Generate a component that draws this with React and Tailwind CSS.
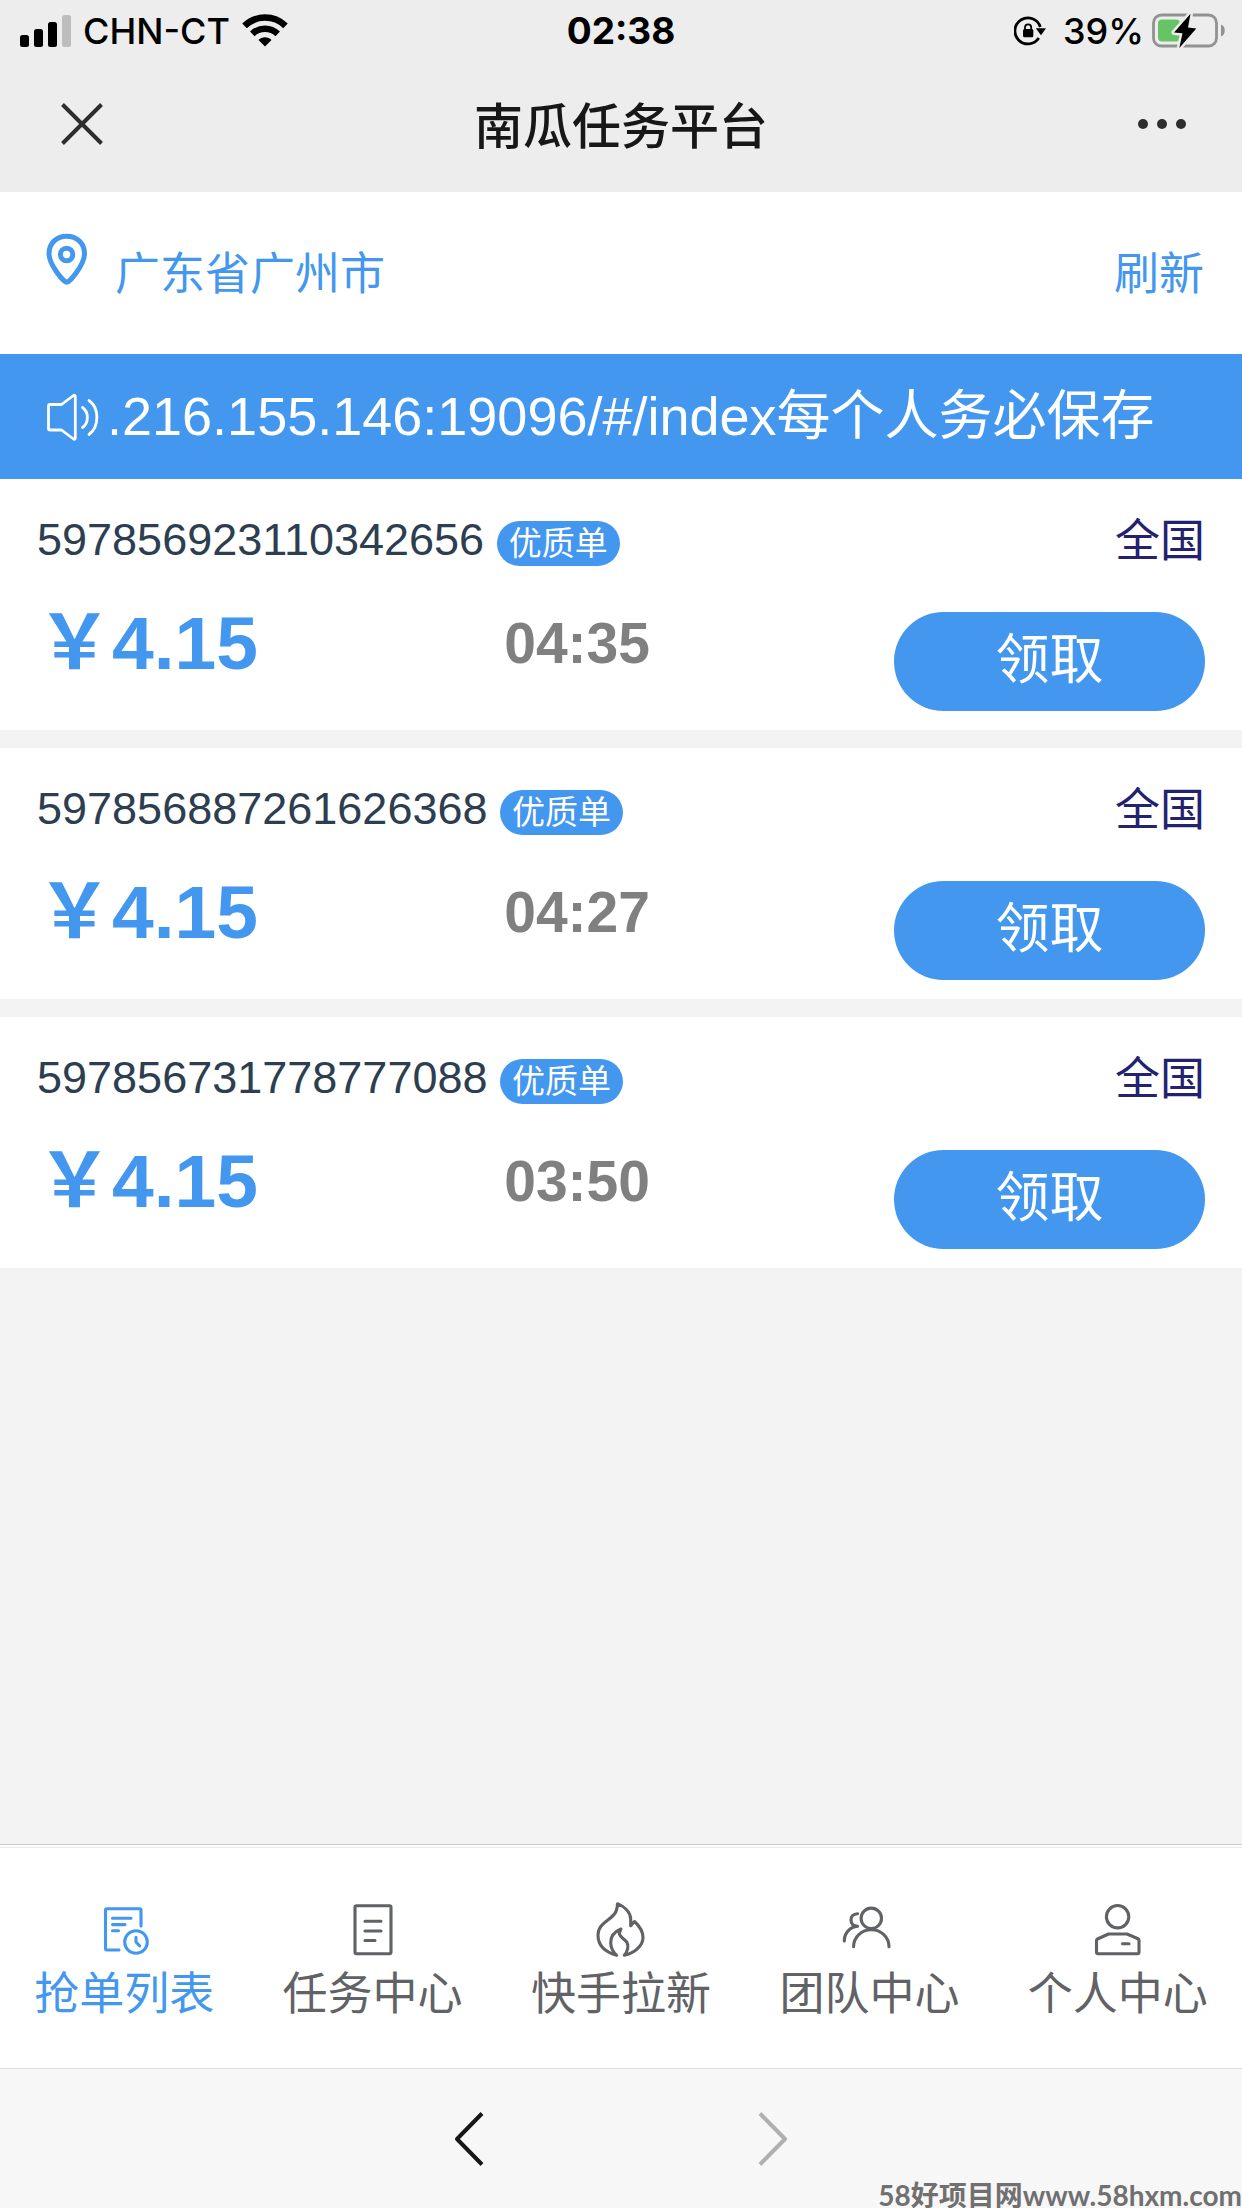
import React from "react";

const orders = [
  { id: "597856923110342656", tag: "优质单", area: "全国", price: "4.15", time: "04:35" },
  { id: "597856887261626368", tag: "优质单", area: "全国", price: "4.15", time: "04:27" },
  { id: "597856731778777088", tag: "优质单", area: "全国", price: "4.15", time: "03:50" },
];

const NavIcon = ({ children }) => (
  <svg
    viewBox="0 0 60 60"
    className="size-[60px]"
    fill="none"
    stroke="currentColor"
    strokeWidth="3.1"
    strokeLinecap="round"
    strokeLinejoin="round"
    aria-hidden="true"
  >
    {children}
  </svg>
);

const tabs = [
  {
    label: "抢单列表",
    active: true,
    icon: (
      <NavIcon>
        <path d="M47 26V10.2q0-1.5-1.5-1.5H13q-1.5 0-1.5 1.5v38.3q0 1.5 1.5 1.5H25" />
        <path d="M18.5 18.3H37M18.5 24.6H31M18.5 30.8H24.5" />
        <circle cx="42" cy="42" r="11.3" />
        <path d="M42 37.3V42l3.6 3.8" />
      </NavIcon>
    ),
  },
  {
    label: "任务中心",
    icon: (
      <NavIcon>
        <rect x="12" y="5.7" width="36" height="48" rx="1.5" />
        <path d="M22 21.3H38M22 31H38M22 40.5H32" />
      </NavIcon>
    ),
  },
  {
    label: "快手拉新",
    icon: (
      <NavIcon>
        <path d="M26.5 3.7C33 6.5 39.7 12 39.7 19.5V25.8C41.2 24.4 42 22.5 43.5 21.5C49 26.5 52 32.5 52 37.5C52 46 43 53.5 33.3 55.3C36.8 51.5 37.8 46 36 42.5C34.5 39.5 28.3 37 28.3 33.3L29.9 29C24 31.5 19.5 36.500 19.700 43C19.900 48 22.500 52.500 25.700 55.300C14 52 7 45 7 35.3C7 22 21 20.5 25 11.5C26.2 8.5 26.5 6.5 26.5 3.7Z" />
      </NavIcon>
    ),
  },
  {
    label: "团队中心",
    icon: (
      <NavIcon>
        <circle cx="32.3" cy="18.3" r="10.2" />
        <path d="M14.6 46.8C14.6 37 22.5 29.7 32.3 29.7S50 37 50 46.8" />
        <path d="M18.6 13.7C14.5 13.9 12 16.3 12 20S14.5 26 18.6 26.3C11 27 5.3 33 5.3 41" />
      </NavIcon>
    ),
  },
  {
    label: "个人中心",
    icon: (
      <NavIcon>
        <circle cx="29.6" cy="16.7" r="11.2" />
        <path d="M8.5 40.5q0-1 1-1.5L20.5 34H39L50 38.7q1 .5 1 1.5V52.2q0 1.5-1.5 1.5H10q-1.5 0-1.5-1.5Z" />
        <path d="M34.5 43.7H41" />
      </NavIcon>
    ),
  },
];

const StatusBar = () => (
  <div className="grid h-[62px] grid-cols-[1fr_auto_1fr] items-center px-4 font-[Inter,sans-serif] text-[36px] leading-[62px] text-black">
    <div className="flex items-center gap-3 pl-1">
      <svg viewBox="0 0 51 32" className="h-8 w-[51px]" aria-hidden="true">
        <rect x="0" y="20" width="9" height="12" rx="2.5" />
        <rect x="14" y="14" width="9" height="18" rx="2.5" />
        <rect x="28" y="7" width="9" height="25" rx="2.5" />
        <rect x="42" y="0" width="9" height="32" rx="2.5" fill="#bdbdbd" />
      </svg>
      <span className="font-medium">CHN-CT</span>
      <svg viewBox="0 0 46 34" className="h-[34px] w-[46px]" fill="none" stroke="#000" strokeWidth="6.5" aria-hidden="true">
        <path d="M2.5 11.9a29.5 29.5 0 0 1 41 0" />
        <path d="M10.3 19.8a18.3 18.3 0 0 1 25.4 0" />
        <path d="M23 32.5l-6.5-6.5c3.5-3.6 9.5-3.6 13 0Z" fill="#000" stroke="none" />
      </svg>
    </div>
    <span className="text-[37px] font-bold">02:38</span>
    <div className="flex items-center justify-end gap-2">
      <svg viewBox="0 0 33 30" className="mr-2 h-[30px] w-[33px]" aria-hidden="true">
        <path d="M26.3 11A13 13 0 1 0 24.8 22" fill="none" stroke="#000" strokeWidth="2.8" />
        <path d="M21.8 12.2H32L27 19.3Z" />
        <rect x="9" y="13" width="10.3" height="8.3" rx="1.5" />
        <path d="M11 13.5V11.5a3.1 3.1 0 0 1 6.2 0V13.5" fill="none" stroke="#000" strokeWidth="1.8" />
      </svg>
      <span className="font-medium">39%</span>
      <svg viewBox="0 0 74 36" className="h-9 w-[74px]" aria-hidden="true">
        <rect x="1.5" y="2" width="63" height="31" rx="8" fill="none" stroke="#929292" strokeWidth="2.8" />
        <rect x="6" y="6.5" width="22" height="22" rx="4" fill="#67c466" />
        <path d="M69 11.5c5 1.5 5 10.5 0 12Z" fill="#929292" />
        <path
          d="M38.5 .8L22 19.5l8.5 .8L27.3 35L44.3 15.5L36 14.5Z"
          stroke="#ededed"
          strokeWidth="5"
          strokeLinejoin="round"
        />
        <path d="M38.5 .8L22 19.5l8.5 .8L27.3 35L44.3 15.5L36 14.5Z" />
      </svg>
    </div>
  </div>
);

const TitleBar = () => (
  <div className="grid h-[130px] grid-cols-[1fr_auto_1fr] items-center px-14 pb-1.5">
    <button type="button" aria-label="关闭" className="flex size-[52px] items-center justify-center">
      <svg viewBox="0 0 42 42" className="size-[42px]" stroke="#2d2d2d" strokeWidth="4" aria-hidden="true">
        <path d="M1.5 1.5L40.5 40.5M40.5 1.5L1.5 40.5" />
      </svg>
    </button>
    <h1 className="pt-2 text-[49px] font-medium text-[#171717]">南瓜任务平台</h1>
    <button type="button" aria-label="更多" className="justify-self-end py-5">
      <svg viewBox="0 0 48 10" className="h-2.5 w-12" fill="#2d2d2d" aria-hidden="true">
        <circle cx="5" cy="5" r="5" />
        <circle cx="24" cy="5" r="5" />
        <circle cx="43" cy="5" r="5" />
      </svg>
    </button>
  </div>
);

const OrderCard = ({ order }) => (
  <li className="bg-white px-[37px] pb-[19px] pt-9">
    <div className="flex justify-between text-[45px] leading-[50px]">
      <p className="h-[50px] text-[#2c3e50]">
        {order.id}{" "}
        <span className="inline-block rounded-full bg-[#4397ee] px-3 text-[33px] leading-[45px] text-white">
          {order.tag}
        </span>
      </p>
      <span className="h-[50px] pt-0.5 text-[#24226f]">{order.area}</span>
    </div>
    <div className="mt-[47px] flex items-start">
      <p className="w-2/5 text-[75px] font-bold leading-[62px] text-[#4397ee]">{"\uFFE5"}{order.price}</p>
      <p className="text-[57px] font-bold leading-[62px] text-[#808080]">{order.time}</p>
      <button
        type="button"
        className="ml-auto h-[99px] w-[311px] rounded-full bg-[#4397ee] pb-1 text-[54px] leading-none text-white"
      >
        领取
      </button>
    </div>
  </li>
);

const App = () => {
  return (
    <div className="relative flex min-h-screen flex-col bg-[#f3f3f3] font-['Liberation_Sans','Noto_Sans_CJK_SC',sans-serif]">
      <header className="bg-[#ededed]">
        <StatusBar />
        <TitleBar />
      </header>

      <div className="flex h-[162px] items-center justify-between bg-white pl-[45px] pr-[38px] pt-1 text-[45px] text-[#4397ee]">
        <div className="flex items-center gap-[26px]">
          <svg viewBox="0 0 44 54" className="mb-8 h-[54px] w-11" fill="none" stroke="currentColor" strokeWidth="5" aria-hidden="true">
            <path d="M21.7 50.3C19 50.3 4 33 4 21.5C4 11 12 4.2 21.7 4.2S39.5 11 39.5 21.5C39.5 33 24.5 50.3 21.7 50.3Z" />
            <circle cx="21.6" cy="22.5" r="6.2" />
          </svg>
          <span>广东省广州市</span>
        </div>
        <button type="button">刷新</button>
      </div>

      <div className="flex h-[125px] items-center gap-2 bg-[#4397ee] pl-[45px] pr-9 text-white">
        <svg
          viewBox="0 0 54 50"
          className="h-[50px] w-[54px] shrink-0"
          fill="none"
          stroke="currentColor"
          strokeWidth="2.8"
          strokeLinecap="round"
          strokeLinejoin="round"
          aria-hidden="true"
        >
          <path d="M5 12.5H16.5L28.5 3.5q1.8-.8 1.8 1V46q0 1.8-1.8 1L16.5 38H5q-1.5 0-1.5-1.5V14q0-1.5 1.5-1.5Z" />
          <path d="M37.5 15.5C44 20 44 31 37.5 35.5M44 8.5C54.5 16 54.5 35 44 42.5" />
        </svg>
        <p className="overflow-hidden whitespace-nowrap text-[54px]">.216.155.146:19096/#/index每个人务必保存</p>
      </div>

      <ul className="flex grow flex-col gap-[18px]">
        {orders.map((order) => (
          <OrderCard key={order.id} order={order} />
        ))}
      </ul>

      <nav className="border-t border-[#cbcbcb] bg-white pt-0.5">
        <div className="grid grid-cols-5 border-t border-[#ebebeb] pb-[38px] pt-[52px]">
          {tabs.map((tab) => (
            <a
              key={tab.label}
              href="#"
              className={`flex flex-col items-center text-[45px] leading-[70px] ${
                tab.active ? "text-[#4397ee]" : "text-[#606266]"
              }`}
            >
              {tab.icon}
              {tab.label}
            </a>
          ))}
        </div>
      </nav>

      <footer className="flex h-[140px] items-center justify-center gap-[244px] border-t border-[#dcdcdc] bg-[#f7f7f7]">
        <button type="button" aria-label="后退" className="flex h-20 w-[60px] items-center justify-center text-[#171717]">
          <svg viewBox="0 0 30 54" className="h-[54px] w-[30px]" fill="none" stroke="currentColor" strokeWidth="4" strokeLinejoin="round" aria-hidden="true">
            <path d="M28 1.5L3 27L28 52.5" />
          </svg>
        </button>
        <button type="button" aria-label="前进" className="flex h-20 w-[60px] items-center justify-center text-[#b0b0b0]">
          <svg viewBox="0 0 30 54" className="h-[54px] w-[30px]" fill="none" stroke="currentColor" strokeWidth="4" strokeLinejoin="round" aria-hidden="true">
            <path d="M2 1.5L27 27L2 52.5" />
          </svg>
        </button>
      </footer>

      <span className="absolute bottom-0 right-0 whitespace-nowrap font-[Lato,'Noto_Sans_CJK_SC',sans-serif] text-[28px] font-bold leading-[26px] text-[#707070]">
        58好项目网www.58hxm.com
      </span>
    </div>
  );
};

export default App;
